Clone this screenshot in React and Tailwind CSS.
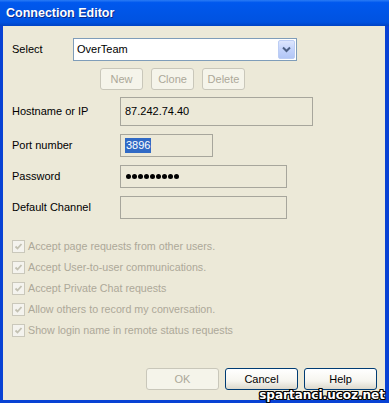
import React from "react";

const font = "font-['Liberation_Sans',Arial,sans-serif]";

const disabledBtn =
  "h-[22px] rounded-[3px] border border-[#c9c7ba] bg-[#f5f4ea] text-[#aca899] text-[11px] flex items-center justify-center";
const activeBtn =
  "h-[22px] rounded-[3px] border border-[#003c74] bg-[linear-gradient(to_bottom,#ffffff_0%,#f6f5ef_60%,#dcd9cc_100%)] text-black text-[11px] flex items-center justify-center";

const options = [
  "Accept page requests from other users.",
  "Accept User-to-user communications.",
  "Accept Private Chat requests",
  "Allow others to record my conversation.",
  "Show login name in remote status requests",
];

const Field = ({ label, width, height = "h-[23px]", children }) => (
  <div className="flex items-center">
    <span className="w-[108px] text-[11px] text-black">{label}</span>
    <div
      className={`${width} ${height} border border-[#a7a69c] bg-[#ece9d8] flex items-center pl-[4px] text-[11px] text-black`}
    >
      {children}
    </div>
  </div>
);

const Checkbox = () => (
  <span className="w-[13px] h-[13px] border border-[#cac8bb] bg-[#f4f3ee] flex items-center justify-center">
    <svg width="9" height="9" viewBox="0 0 9 9">
      <path d="M1.5 4.5 L3.5 6.5 L7.5 2" fill="none" stroke="#c3c1b2" strokeWidth="1.8" />
    </svg>
  </span>
);

export default function App() {
  return (
    <div className={`relative w-[389px] h-[403px] flex flex-col bg-[#0842d4] ${font}`}>
      {/* Title bar */}
      <div className="h-[26px] flex items-center px-[6px] bg-[linear-gradient(to_bottom,#2a7bf5_0%,#0058ee_10%,#0055e6_50%,#0052e0_85%,#0043c4_100%)]">
        <span className="text-white font-bold text-[12.5px] [text-shadow:1px_1px_0_#0a2a8a]">
          Connection Editor
        </span>
      </div>

      {/* Body */}
      <div className="flex-1 ml-[3px] mr-[4px] mb-[3px] bg-[#ece9d8] flex flex-col pl-[9px] pr-[8px] pt-[12px] pb-[10px]">
        {/* Select row */}
        <div className="flex items-center">
          <span className="w-[61px] text-[11px] text-black">Select</span>
          <div className="w-[224px] h-[23px] border border-[#7f9db9] bg-white flex items-center justify-between pl-[3px] pr-[1px]">
            <span className="text-[11px] text-black">OverTeam</span>
            <span className="w-[17px] h-[19px] rounded-[2px] border border-[#bccdf4] bg-[linear-gradient(to_bottom,#dde6fd_0%,#c3d3fb_50%,#b2c6f6_100%)] flex items-center justify-center">
              <svg width="9" height="7" viewBox="0 0 9 7">
                <path d="M1 1.5 L4.5 5 L8 1.5" fill="none" stroke="#4d6185" strokeWidth="2" />
              </svg>
            </span>
          </div>
        </div>

        {/* New / Clone / Delete */}
        <div className="flex mt-[7px] ml-[88px] gap-[8px]">
          <div className={`${disabledBtn} w-[43px]`}>New</div>
          <div className={`${disabledBtn} w-[43px]`}>Clone</div>
          <div className={`${disabledBtn} w-[43px]`}>Delete</div>
        </div>

        {/* Fields */}
        <div className="flex flex-col gap-[8px] mt-[7px]">
          <Field label="Hostname or IP" width="w-[193px]" height="h-[29px]">
            87.242.74.40
          </Field>
          <Field label="Port number" width="w-[93px]">
            <span className="bg-[#316ac5] text-white px-[1px] leading-[15px]">3896</span>
          </Field>
          <Field label="Password" width="w-[167px]">
            <div className="flex gap-[1px] pl-[1px]">
              {Array.from({ length: 9 }).map((_, i) => (
                <span key={i} className="w-[5px] h-[5px] rounded-full bg-black" />
              ))}
            </div>
          </Field>
          <Field label="Default Channel" width="w-[167px]" />
        </div>

        {/* Checkboxes */}
        <div className="flex flex-col gap-[8px] mt-[21px]">
          {options.map((o) => (
            <div key={o} className="flex items-center gap-[3px] h-[13px]">
              <Checkbox />
              <span className="text-[10.7px] text-[#aca899]">{o}</span>
            </div>
          ))}
        </div>

        {/* Bottom buttons */}
        <div className="mt-auto flex justify-end gap-[6px]">
          <div className={`${disabledBtn} w-[73px]`}>OK</div>
          <div className={`${activeBtn} w-[73px]`}>Cancel</div>
          <div className={`${activeBtn} w-[73px]`}>Help</div>
        </div>
      </div>

      {/* Watermark */}
      <span className="absolute right-[4px] bottom-[1px] font-['DejaVu_Sans',sans-serif] font-bold text-[12px] leading-[14px] text-white [text-shadow:-1px_-1px_0_#000,1px_-1px_0_#000,-1px_1px_0_#000,1px_1px_0_#000,1px_0_0_#000,-1px_0_0_#000,0_1px_0_#000,0_-1px_0_#000]">
        spartanci.ucoz.net
      </span>
    </div>
  );
}
